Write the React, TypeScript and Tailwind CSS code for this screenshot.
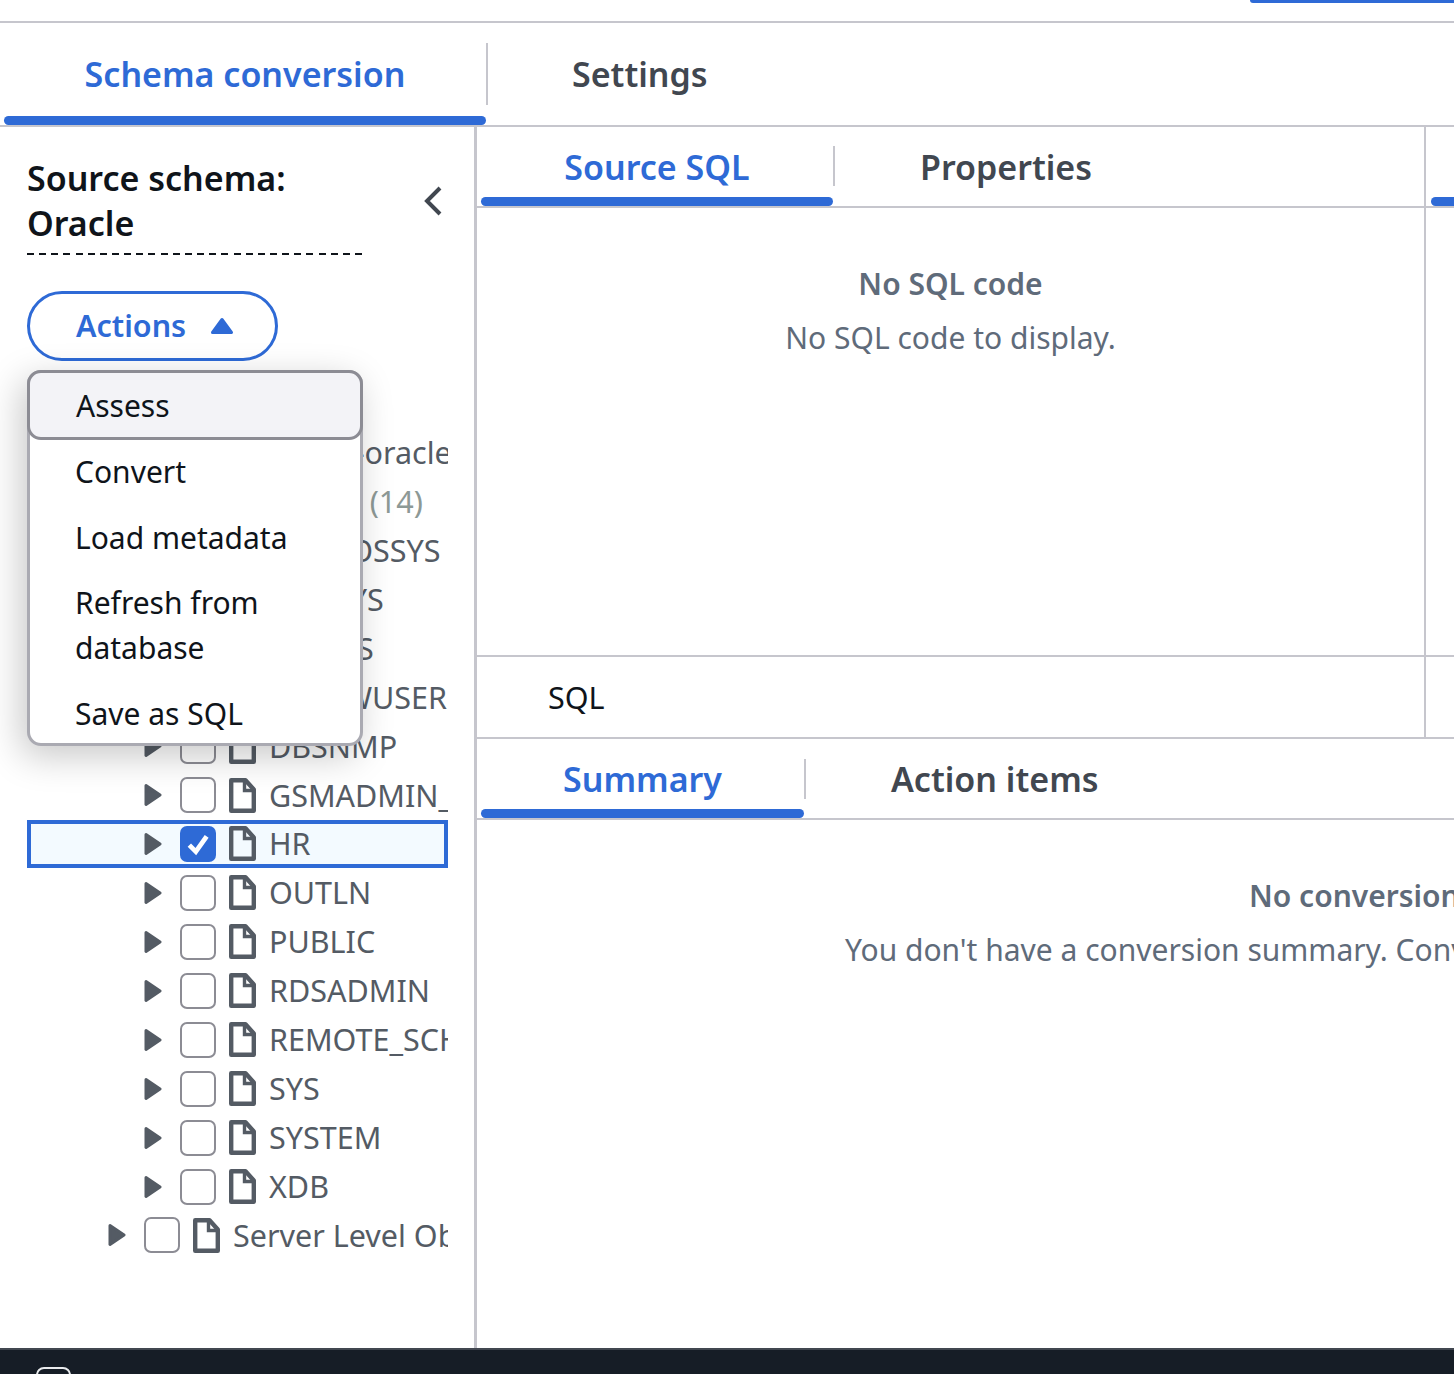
import React from "react";

const TREE = [
  { name: "source-dbs-oracle", level: 0 },
  { name: "Schemas", count: "(14)", level: 1 },
  { name: "APPQOSSYS", level: 2 },
  { name: "AUDSYS", level: 2 },
  { name: "CTXSYS", level: 2 },
  { name: "DBSFWUSER", level: 2 },
  { name: "DBSNMP", level: 2 },
  { name: "GSMADMIN_INTERNAL", level: 2 },
  { name: "HR", level: 2, selected: true },
  { name: "OUTLN", level: 2 },
  { name: "PUBLIC", level: 2 },
  { name: "RDSADMIN", level: 2 },
  { name: "REMOTE_SCHEDULER_AGENT", level: 2 },
  { name: "SYS", level: 2 },
  { name: "SYSTEM", level: 2 },
  { name: "XDB", level: 2 },
  { name: "Server Level Objects", level: 1 },
];

const INDENT = ["pl-[45px]", "pl-[81px]", "pl-[117px]"];

const Caret = () => (
  <svg viewBox="0 0 18 24" className="w-[18px] h-[24px] shrink-0">
    <path d="M2 2.5 L16 12 L2 21.5 Z" fill="#545b64" stroke="#545b64" strokeWidth="3" strokeLinejoin="round" />
  </svg>
);

const FileIcon = () => (
  <svg viewBox="0 0 27 35" className="w-[27px] h-[35px] shrink-0" fill="none">
    <path d="M2.2 2.2 H16.5 L24.8 11.5 V32.8 H2.2 Z" stroke="#545b64" strokeWidth="4.4" strokeLinejoin="round" />
    <path d="M15.5 2 V12.5 H25" stroke="#545b64" strokeWidth="3.4" />
  </svg>
);

const Checkbox = ({ checked }: { checked?: boolean }) =>
  checked ? (
    <span className="flex items-center justify-center w-[36px] h-[36px] shrink-0 rounded-[7px] bg-[#2e6ad6]">
      <svg viewBox="0 0 24 24" className="w-[26px] h-[26px]" fill="none">
        <path d="M4 13 L10 19 L20 5" stroke="white" strokeWidth="4.4" />
      </svg>
    </span>
  ) : (
    <span className="block w-[36px] h-[36px] shrink-0 rounded-[7px] border-2 border-[#8c8c94] bg-white" />
  );

const TreeRow = ({ name, count, level, selected }: { name: string; count?: string; level: number; selected?: boolean }) => (
  <div
    className={`flex items-center h-[48.94px] overflow-hidden whitespace-nowrap ${
      selected ? "pl-[113px] bg-[#f3faff] border-4 border-[#2e6ad6]" : INDENT[level]
    }`}
  >
    <Caret />
    <span className="ml-[18px]">
      <Checkbox checked={selected} />
    </span>
    <span className="ml-[13px]">
      <FileIcon />
    </span>
    <span className="ml-[13px] -mt-[1px] text-[30.5px] leading-[40px] text-[#545b64]">
      {name}
      {count && <span className="ml-[9px] text-[#8d9996]">{count}</span>}
    </span>
  </div>
);

const Tab = ({ label, width, active, pad }: { label: string; width?: string; active?: boolean; pad: string }) => (
  <div className={`flex flex-col h-full ${width ?? ""}`}>
    <div
      className={`flex-1 text-center text-[34px] leading-[40px] font-semibold whitespace-nowrap ${pad} ${
        active ? "text-[#2e6ad6]" : "text-[#414750]"
      }`}
    >
      {label}
    </div>
    {active && <div className="h-[9px] rounded-[5px] bg-[#2e6ad6]" />}
  </div>
);

const MENU_ITEMS = ["Convert", "Load metadata", "Refresh from database", "Save as SQL"];

const ActionsMenu = () => (
  <div className="absolute left-[27px] top-[243px] w-[336px] h-[376px] z-10 rounded-[14px] border-[3px] border-[#aaaab2] bg-white shadow-[-6px_10px_36px_rgba(0,0,0,0.22)]">
    <div className="-m-[3px] h-[70px] pl-[46px] flex items-center rounded-[14px] border-[3px] border-[#8c8c94] bg-[#f3f3f7] text-[30px] text-[#0f141a]">
      Assess
    </div>
    <div className="pt-[12px] pl-[45px] pr-[40px] text-[30px] leading-[45px] text-[#0f141a]">
      {MENU_ITEMS.map((item) => (
        <div key={item} className="pb-[20.5px]">
          {item}
        </div>
      ))}
    </div>
  </div>
);

const App = () => {
  return (
    <div className="relative flex flex-col w-[1454px] h-[1374px] overflow-hidden bg-white font-['Noto_Sans',sans-serif]">
      <div className="flex justify-end h-[23px] shrink-0 border-b-2 border-[#c6c6cd]">
        <div className="w-[204px] h-[3px] rounded-bl-[12px] bg-[#2e6ad6]" />
      </div>

      <div className="flex h-[104px] shrink-0 pl-[4px] border-b-2 border-[#c6c6cd]">
        <Tab label="Schema conversion" width="w-[482px]" active pad="pt-[31px]" />
        <div className="w-[2px] h-[62px] mt-[20px] bg-[#c6c6cd]" />
        <div className="ml-[84px]">
          <Tab label="Settings" pad="pt-[31px]" />
        </div>
      </div>

      <div className="flex flex-1 min-h-0">
        <aside className="relative w-[477px] shrink-0 pl-[27px] border-r-[3px] border-[#c6c6cd]">
          <div className="flex items-center w-[420px] pt-[29px]">
            <div className="w-[335px] shrink-0">
              <h2 className="pb-[7px] text-[34px] leading-[45px] font-semibold text-[#0f141a]">
                Source schema:
                <br />
                Oracle
              </h2>
              <div className="h-[2px] bg-[repeating-linear-gradient(90deg,#0f141a_0_7px,transparent_7px_12.15px)]" />
            </div>
            <svg viewBox="0 0 20 30" className="w-[20px] h-[30px] ml-[61px] -mt-[9px]" fill="none">
              <path d="M17 2 L4 15 L17 28" stroke="#414750" strokeWidth="4" />
            </svg>
          </div>
          <button className="flex items-center w-[251px] h-[70px] mt-[36px] pl-[46px] rounded-full border-[3px] border-[#2e6ad6] text-[30.5px] font-semibold text-[#2e6ad6]">
            Actions
            <svg viewBox="0 0 24 18" className="w-[24px] h-[18px] ml-[24px]">
              <path d="M12 2.5 L21.5 15.5 H2.5 Z" fill="#2e6ad6" stroke="#2e6ad6" strokeWidth="3" strokeLinejoin="round" />
            </svg>
          </button>
          <div className="w-[421px] mt-[67px]">
            {TREE.map((row) => (
              <TreeRow key={row.name} {...row} />
            ))}
          </div>
          <ActionsMenu />
        </aside>

        <div className="flex flex-col flex-1 min-w-0">
          <div className="flex h-[612px] shrink-0 border-b-2 border-[#c6c6cd]">
            <section className="flex flex-col w-[949px] shrink-0 border-r-2 border-[#c6c6cd]">
              <div className="flex h-[81px] shrink-0 pl-[4px] border-b-2 border-[#c6c6cd]">
                <Tab label="Source SQL" width="w-[352px]" active pad="pt-[20px]" />
                <div className="w-[2px] h-[40px] mt-[19px] bg-[#c6c6cd]" />
                <div className="ml-[85px]">
                  <Tab label="Properties" pad="pt-[20px]" />
                </div>
              </div>
              <div className="flex-1 pt-[56px] text-center border-b-2 border-[#c6c6cd]">
                <p className="text-[30px] leading-[40px] font-semibold text-[#5f6b7a]">No SQL code</p>
                <p className="mt-[14px] text-[30px] leading-[40px] text-[#5f6b7a]">No SQL code to display.</p>
              </div>
              <div className="flex items-center h-[80px] shrink-0 pl-[71px] pt-[2px] text-[30.5px] text-[#0f141a]">SQL</div>
            </section>
            <div className="flex-1 flex flex-col">
              <div className="h-[81px] shrink-0 flex flex-col justify-end pl-[5px] border-b-2 border-[#c6c6cd]">
                <div className="h-[9px] rounded-l-[5px] bg-[#2e6ad6]" />
              </div>
              <div className="h-[449px] shrink-0 border-b-2 border-[#c6c6cd]" />
            </div>
          </div>

          <div className="flex h-[81px] shrink-0 pl-[4px] border-b-2 border-[#c6c6cd]">
            <Tab label="Summary" width="w-[323px]" active pad="pt-[20px]" />
            <div className="w-[2px] h-[40px] mt-[20px] bg-[#c6c6cd]" />
            <div className="ml-[85px]">
              <Tab label="Action items" pad="pt-[20px]" />
            </div>
          </div>
          <div className="pt-[56px] whitespace-nowrap text-[30px] leading-[40px] text-[#5f6b7a]">
            <p className="pl-[772px] font-semibold">No conversion summary</p>
            <p className="mt-[14px] pl-[368px]">You don't have a conversion summary. Convert a schema to view it.</p>
          </div>
        </div>
      </div>

      <footer className="h-[26px] shrink-0 pl-[36px] pt-[17px] border-t-2 border-[#414750] bg-[#161d26] overflow-hidden">
        <div className="w-[35px] h-[20px] rounded-t-[8px] border-2 border-[#e9ebed]" />
      </footer>
    </div>
  );
};

export default App;
